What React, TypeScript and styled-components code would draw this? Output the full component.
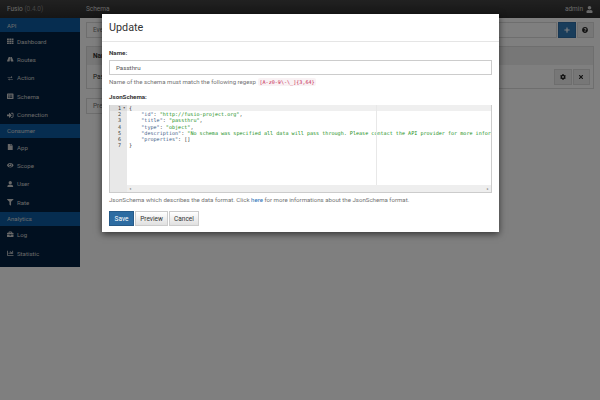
import React from 'react';
import styled, { createGlobalStyle } from 'styled-components';
import {
    FaBriefcase,
    FaChartBar,
    FaCog,
    FaEye,
    FaFile,
    FaFilter,
    FaListAlt,
    FaPlus,
    FaQuestionCircle,
    FaRoad,
    FaSignInAlt,
    FaTh,
    FaTimes,
    FaUser,
} from 'react-icons/fa';
import { BiTransfer } from 'react-icons/bi';

const GlobalStyle = createGlobalStyle`
    html, body {
        margin: 0;
        width: 600px;
        height: 400px;
        overflow: hidden;
        background: #fff;
        font-family: Roboto, "Liberation Sans", sans-serif;
        color: #333;
    }
    * {
        box-sizing: border-box;
    }
`;

const Page = styled.div`
    position: relative;
    width: 600px;
    height: 400px;
    overflow: hidden;
`;

const Navbar = styled.header`
    height: 18px;
    background: linear-gradient(#424242, #2c2c2c);
    display: flex;
    align-items: center;
    font-size: 6.5px;
    color: #d0d0d0;
`;

const Brand = styled.div`
    width: 86px;
    padding-left: 7px;
    span {
        color: #888;
    }
`;

const NavUser = styled.div`
    margin-left: auto;
    padding-right: 7px;
    display: flex;
    align-items: center;
    gap: 3px;
`;

const Body = styled.div`
    display: flex;
    align-items: flex-start;
`;

const Sidebar = styled.nav`
    width: 80px;
    height: 249px;
    background: #022040;
    flex-shrink: 0;
`;

const SectionTitle = styled.div`
    height: 14px;
    padding-left: 7px;
    background: #0c5aa0;
    color: #d8d8d8;
    font-size: 6.1px;
    display: flex;
    align-items: center;
`;

const NavList = styled.ul`
    list-style: none;
    margin: 0;
    padding: 0;
`;

const NavItem = styled.li`
    height: 18.4px;
    padding-left: 7px;
    display: flex;
    align-items: center;
    gap: 3.5px;
    font-size: 6.1px;
    color: #d0d0d0;
    svg {
        width: 6.5px;
        height: 6.5px;
        flex-shrink: 0;
    }
`;

const Content = styled.main`
    flex: 1;
    padding: 4px 6px 0 6px;
    display: flex;
    flex-direction: column;
`;

const Toolbar = styled.div`
    height: 16px;
    display: flex;
    gap: 1px;
    align-items: stretch;
`;

const SearchBox = styled.div`
    flex: 1;
    border: 1px solid #ddd;
    padding-left: 6px;
    font-size: 6.5px;
    color: #777;
    display: flex;
    align-items: center;
`;

const IconButton = styled.div<{ $primary?: boolean }>`
    width: 17.5px;
    height: 16px;
    border: 1px solid ${(props) => (props.$primary ? '#2e6da4' : '#ddd')};
    background: ${(props) => (props.$primary ? '#337ab7' : '#eee')};
    color: ${(props) => (props.$primary ? '#fff' : '#222')};
    display: flex;
    align-items: center;
    justify-content: center;
    svg {
        width: 6px;
        height: 6px;
    }
`;

const Table = styled.div`
    margin-top: 8px;
    border: 1px solid #ddd;
`;

const TableHead = styled.div`
    height: 18px;
    background: #eee;
    padding-left: 6px;
    font-size: 6.5px;
    font-weight: 700;
    display: flex;
    align-items: center;
`;

const TableRow = styled.div`
    height: 23px;
    padding: 0 3px 0 6px;
    font-size: 6.5px;
    display: flex;
    align-items: center;
    gap: 1px;
    span {
        margin-right: auto;
    }
`;

const Pager = styled.div`
    margin-top: 9px;
    width: 40px;
    height: 16px;
    border: 1px solid #ddd;
    padding-left: 6px;
    font-size: 6.5px;
    color: #777;
    display: flex;
    align-items: center;
`;

const Backdrop = styled.div`
    position: absolute;
    inset: 0;
    background: rgba(0, 0, 0, 0.5);
`;

const Modal = styled.section`
    position: absolute;
    left: 102px;
    top: 14px;
    width: 397px;
    height: 218px;
    background: #fff;
    box-shadow: 0 2px 7px rgba(0, 0, 0, 0.6);
`;

const ModalHeader = styled.div`
    height: 28px;
    padding-left: 7px;
    border-bottom: 1px solid #e5e5e5;
    display: flex;
    align-items: center;
    font-size: 10.8px;
    color: #333;
`;

const ModalBody = styled.div`
    padding: 7px 7px 0;
`;

const Label = styled.label`
    display: block;
    height: 11px;
    font-size: 6.2px;
    font-weight: 700;
    line-height: 8px;
    color: #333;
`;

const TextInput = styled.div`
    height: 15px;
    border: 1px solid #ccc;
    padding-left: 6px;
    font-size: 6.2px;
    color: #555;
    display: flex;
    align-items: center;
`;

const Help = styled.p<{ $gap?: number }>`
    margin: 2px 0 ${(props) => props.$gap ?? 6}px;
    font-size: 6.1px;
    line-height: 9px;
    color: #737373;
    white-space: nowrap;
    a {
        color: #1f6fb5;
    }
`;

const Regexp = styled.code`
    margin-left: 2px;
    padding: 1px 1.5px;
    border-radius: 2px;
    background: #f9f2f4;
    color: #c7254e;
    font-family: "DejaVu Sans Mono", monospace;
    font-size: 5.1px;
`;

const Editor = styled.div`
    position: relative;
    height: 88px;
    margin-top: 1px;
    border: 1px solid #ccc;
    border-top: 0;
    overflow: hidden;
    display: flex;
    font-family: "DejaVu Sans Mono", monospace;
    font-size: 5.1px;
    line-height: 6.2px;
`;

const Gutter = styled.div`
    width: 17px;
    background: #e8e8e8;
    color: #333;
    flex-shrink: 0;
`;

const GutterLine = styled.div<{ $active?: boolean }>`
    position: relative;
    height: 6.2px;
    padding-right: 6px;
    text-align: right;
    background: ${(props) => (props.$active ? '#dcdcdc' : 'transparent')};
`;

const FoldMark = styled.span`
    position: absolute;
    right: 1.5px;
    top: 0;
    font-size: 4px;
`;

const Code = styled.pre`
    margin: 0;
    flex: 1;
    min-width: 0;
    overflow: hidden;
    font: inherit;
`;

const CodeLine = styled.div<{ $active?: boolean }>`
    height: 6.2px;
    padding-left: 2px;
    white-space: pre;
    background: ${(props) => (props.$active ? '#efefef' : 'transparent')};
`;

const Key = styled.span`
    color: #445d88;
`;

const Str = styled.span`
    color: #1a8f1a;
`;

const PrintMargin = styled.div`
    position: absolute;
    left: 266px;
    top: 0;
    bottom: 0;
    width: 1px;
    background: #e8e8e8;
`;

const ScrollBar = styled.div`
    position: absolute;
    left: 17px;
    right: 0;
    bottom: 0;
    height: 7px;
    background: #eee;
    display: flex;
    justify-content: space-between;
    align-items: center;
    padding: 0 2px;
    color: #555;
    font-size: 4px;
    line-height: 1;
`;

const Actions = styled.div`
    display: flex;
    gap: 1px;
    margin-top: 7px;
`;

const Button = styled.button<{ $primary?: boolean; $width: number }>`
    width: ${(props) => props.$width}px;
    height: 15px;
    padding: 0;
    border: 1px solid ${(props) => (props.$primary ? '#265a88' : '#ccc')};
    background: ${(props) => (props.$primary ? '#2d6ca2' : 'linear-gradient(#fff, #e0e0e0)')};
    color: ${(props) => (props.$primary ? '#fff' : '#333')};
    font-family: inherit;
    font-size: 6.5px;
`;

const sideSections = [
    {
        title: 'API',
        items: [
            { label: 'Dashboard', icon: <FaTh /> },
            { label: 'Routes', icon: <FaRoad /> },
            { label: 'Action', icon: <BiTransfer /> },
            { label: 'Schema', icon: <FaListAlt /> },
            { label: 'Connection', icon: <FaSignInAlt /> },
        ],
    },
    {
        title: 'Consumer',
        items: [
            { label: 'App', icon: <FaFile /> },
            { label: 'Scope', icon: <FaEye /> },
            { label: 'User', icon: <FaUser /> },
            { label: 'Rate', icon: <FaFilter /> },
        ],
    },
    {
        title: 'Analytics',
        items: [
            { label: 'Log', icon: <FaBriefcase /> },
            { label: 'Statistic', icon: <FaChartBar /> },
        ],
    },
];

const App = () => {
    return (
        <Page>
            <GlobalStyle />
            <Navbar>
                <Brand>
                    Fusio <span>(0.4.0)</span>
                </Brand>
                <div>Schema</div>
                <NavUser>
                    admin <FaUser size={7} />
                </NavUser>
            </Navbar>
            <Body>
                <Sidebar>
                    {sideSections.map((section) => (
                        <div key={section.title}>
                            <SectionTitle>{section.title}</SectionTitle>
                            <NavList>
                                {section.items.map((item) => (
                                    <NavItem key={item.label}>
                                        {item.icon}
                                        {item.label}
                                    </NavItem>
                                ))}
                            </NavList>
                        </div>
                    ))}
                </Sidebar>
                <Content>
                    <Toolbar>
                        <SearchBox>Eve</SearchBox>
                        <IconButton $primary>
                            <FaPlus />
                        </IconButton>
                        <IconButton>
                            <FaQuestionCircle />
                        </IconButton>
                    </Toolbar>
                    <Table>
                        <TableHead>Name</TableHead>
                        <TableRow>
                            <span>Passthru</span>
                            <IconButton>
                                <FaCog />
                            </IconButton>
                            <IconButton>
                                <FaTimes />
                            </IconButton>
                        </TableRow>
                    </Table>
                    <Pager>Prev</Pager>
                </Content>
            </Body>
            <Backdrop />
            <Modal>
                <ModalHeader>Update</ModalHeader>
                <ModalBody>
                    <Label>Name:</Label>
                    <TextInput>Passthru</TextInput>
                    <Help>
                        Name of the schema must match the following regexp
                        <Regexp>[A-z0-9\-\_]{'{3,64}'}</Regexp>
                    </Help>
                    <Label>JsonSchema:</Label>
                    <Editor>
                        <Gutter>
                            {[1, 2, 3, 4, 5, 6, 7].map((n) => (
                                <GutterLine key={n} $active={n === 1}>
                                    {n}
                                    {n === 1 && <FoldMark>▾</FoldMark>}
                                </GutterLine>
                            ))}
                        </Gutter>
                        <Code>
                            <CodeLine $active>{'{'}</CodeLine>
                            <CodeLine>
                                {'    '}
                                <Key>"id"</Key>: <Str>"http://fusio-project.org"</Str>,
                            </CodeLine>
                            <CodeLine>
                                {'    '}
                                <Key>"title"</Key>: <Str>"passthru"</Str>,
                            </CodeLine>
                            <CodeLine>
                                {'    '}
                                <Key>"type"</Key>: <Str>"object"</Str>,
                            </CodeLine>
                            <CodeLine>
                                {'    '}
                                <Key>"description"</Key>:{' '}
                                <Str>"No schema was specified all data will pass through. Please contact the API provider for more informations"</Str>,
                            </CodeLine>
                            <CodeLine>
                                {'    '}
                                <Key>"properties"</Key>: []
                            </CodeLine>
                            <CodeLine>{'}'}</CodeLine>
                        </Code>
                        <PrintMargin />
                        <ScrollBar>
                            <span>◂</span>
                            <span>▸</span>
                        </ScrollBar>
                    </Editor>
                    <Help $gap={0}>
                        JsonSchema which describes the data format. Click <a>here</a> for more informations about the JsonSchema format.
                    </Help>
                    <Actions>
                        <Button $primary $width={25}>Save</Button>
                        <Button $width={33}>Preview</Button>
                        <Button $width={30}>Cancel</Button>
                    </Actions>
                </ModalBody>
            </Modal>
        </Page>
    );
};

export default App;
